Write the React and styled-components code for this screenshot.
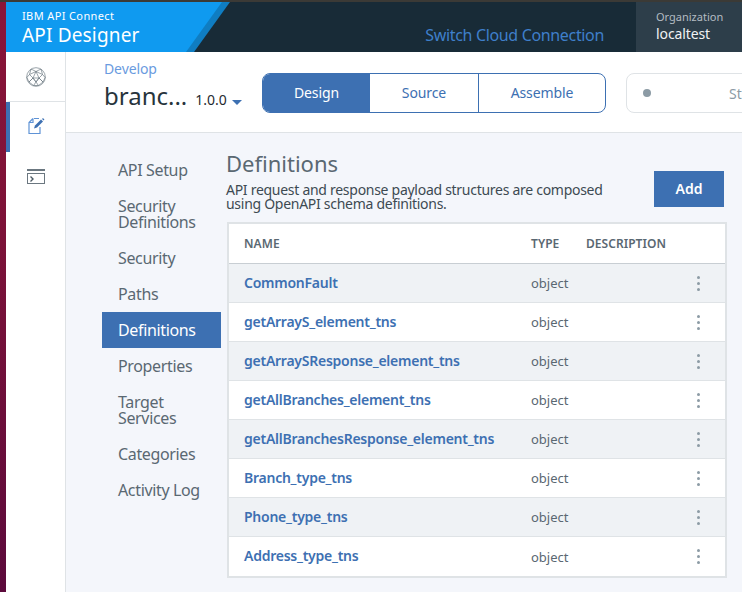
import React from 'react';
import styled, { createGlobalStyle } from 'styled-components';

const Global = createGlobalStyle`
  html, body { margin: 0; padding: 0; height: 592px; overflow: hidden; background: #f4f6fb; }
  * { box-sizing: border-box; }
  body { font-family: "Noto Sans", "Open Sans", sans-serif; }
`;

const Page = styled.div`
  width: 742px; height: 592px; overflow: hidden; display: flex; flex-direction: column;
`;
const TopEdge = styled.div`height: 2px; flex: none; background: #3b3a36;`;
const Shell = styled.div`flex: 1; display: flex; min-height: 0;`;
const Wallpaper = styled.div`width: 6px; flex: none; background: linear-gradient(180deg, #8a1538 0%, #7c1238 40%, #5c0a3c 100%);`;
const Frame = styled.div`flex: 1; min-width: 0; display: flex; flex-direction: column;`;

const Header = styled.header`height: 50px; flex: none; display: flex; background: #182b37; position: relative;`;
const Brand = styled.div`
  width: 224px; flex: none; background: #0f7dc2; color: #fff;
  clip-path: polygon(0 0, 224px 0, 188px 100%, 0 100%);
`;
const BrandFill = styled.div`
  height: 100%; padding: 7px 0 0 16px; background: #0f9af0;
  clip-path: polygon(0 0, 216px 0, 180px 100%, 0 100%);
`;
const BrandSmall = styled.div`font-size: 11px; line-height: 14px; letter-spacing: .38px;`;
const BrandBig = styled.div`font-size: 19px; line-height: 25px; letter-spacing: .16px;`;
const HeaderLink = styled.a`
  margin-left: auto; align-self: flex-end; padding-bottom: 6px; margin-right: 32px;
  font-size: 16px; line-height: 22px; color: #3f7fca; letter-spacing: -.34px;
`;
const Org = styled.div`width: 106px; flex: none; background: #2d3e4a; padding: 8px 0 0 20px;`;
const OrgLabel = styled.div`font-size: 11px; line-height: 14px; color: #b4bcc2;`;
const OrgName = styled.div`font-size: 14px; line-height: 18px; color: #f0f2f4; margin-top: 1px; letter-spacing: -.1px;`;

const Workspace = styled.div`flex: 1; display: flex; min-height: 0;`;
const Rail = styled.nav`width: 60px; flex: none; background: #fff; border-right: 1px solid #dfe3e6; display: flex; flex-direction: column;`;
const RailItem = styled.div`
  height: ${p => p.$h}px; display: flex; align-items: center; justify-content: center;
  border-bottom: ${p => p.$divider ? '1px solid #dfe3e6' : 'none'};
  border-left: 4px solid ${p => p.$active ? '#3d70b2' : 'transparent'};
  padding-right: 4px; padding-bottom: ${p => p.$lift || 0}px; flex: none;
`;

const Main = styled.main`flex: 1; min-width: 0; display: flex; flex-direction: column;`;
const Toolbar = styled.div`
  height: 81px; flex: none; background: #fff; border-bottom: 1px solid #dfe3e6;
  display: flex; align-items: flex-start; padding: 21px 0 0 38px; overflow: hidden;
`;
const Crumb = styled.div`width: 158px; flex: none; margin-top: -14px;`;
const CrumbLink = styled.div`font-size: 14px; line-height: 20px; color: #6a9be0; letter-spacing: -.1px;`;
const ApiName = styled.div`display: flex; align-items: baseline; margin-top: 1px; color: #27343c;`;
const ApiTitle = styled.span`font-size: 24px; line-height: 32px;`;
const ApiVersion = styled.span`font-size: 14px; margin-left: 8px; color: #1f2a30;`;
const Caret = styled.span`
  width: 0; height: 0; margin-left: 5px; align-self: center; margin-top: 12px;
  border-left: 5px solid transparent; border-right: 5px solid transparent; border-top: 5px solid #3d70b2;
`;
const Tabs = styled.div`width: 344px; height: 40px; flex: none; display: flex; border: 1px solid #3d70b2; border-radius: 8px; overflow: hidden; background: #fff;`;
const Tab = styled.div`
  width: ${p => p.$w}px; flex: none; display: flex; align-items: center; justify-content: center;
  font-size: 14px; padding-bottom: 2px; letter-spacing: -.1px; color: ${p => p.$active ? '#fff' : '#3d70b2'};
  background: ${p => p.$active ? '#3d70b2' : 'transparent'};
  border-left: ${p => p.$sep ? '1px solid #3d70b2' : 'none'};
`;
const Status = styled.div`
  width: 240px; height: 40px; flex: none; margin-left: 20px; display: flex; align-items: center;
  border: 1px solid #dfe3e6; border-radius: 8px; padding-left: 16px; background: #fff;
`;
const StatusDot = styled.span`width: 8px; height: 8px; border-radius: 50%; background: #8c9ba5; flex: none;`;
const StatusText = styled.span`margin-left: 78px; font-size: 14px; color: #8c9ba5; white-space: nowrap;`;

const Body = styled.div`flex: 1; min-height: 0; display: flex; background: #f4f6fb; padding: 19px 0 0 36px;`;
const SideNav = styled.nav`width: 119px; flex: none; display: flex; flex-direction: column;`;
const SideItem = styled.div`
  padding: 10px 8px 10px 16px; font-size: 16px; line-height: 16px; letter-spacing: -.35px;
  color: ${p => p.$active ? '#fff' : '#5a6872'};
  background: ${p => p.$active ? '#3d70b2' : 'transparent'};
`;
const Content = styled.section`width: 501px; flex: none; margin-left: 5px;`;
const TitleRow = styled.div`display: flex; justify-content: space-between; align-items: flex-start; height: 70px;`;
const Heading = styled.h1`margin: -2px 0 0; font-size: 22px; line-height: 26px; font-weight: 400; color: #5a6872;`;
const Lead = styled.p`margin: 7px 0 0; width: 390px; font-size: 14px; line-height: 14px; color: #3d4a52; letter-spacing: -.28px;`;
const AddButton = styled.button`
  width: 70px; height: 36px; margin-top: 19px; margin-right: 3px; border: 0; padding: 0 0 2px;
  background: #3d70b2; color: #fff; font: 600 14px "Noto Sans", sans-serif;
`;
const Table = styled.div`margin-left: 1px; width: 500px; border: 2px solid #dfe3e6; background: #fff;`;
const RowGrid = styled.div`
  display: grid; grid-template-columns: 287px 55px 1fr 28px; align-items: center; padding-left: 15px;
`;
const HeadRow = styled(RowGrid)`
  height: 40px; border-bottom: 1px solid #c8ced3; font-size: 12px; font-weight: 600; color: #5a6872; letter-spacing: .05px;
`;
const Row = styled(RowGrid)`
  height: 39px; background: ${p => p.$odd ? '#eff2f5' : '#fff'};
  border-bottom: ${p => p.$last ? 'none' : '1px solid #dfe3e6'};
`;
const RowName = styled.a`font-size: 14px; line-height: 18px; padding-bottom: 1px; font-weight: 600; color: #3d70b2; white-space: nowrap; letter-spacing: -.25px;`;
const RowType = styled.span`font-size: 13px; color: #5a6872;`;
const Kebab = styled.div`display: flex; flex-direction: column; gap: 3px; width: 3px;`;
const KebabDot = styled.span`width: 3px; height: 3px; border-radius: 50%; background: #8c9ba5;`;

const sections = [
  ['API Setup'], ['Security', 'Definitions'], ['Security'], ['Paths'], ['Definitions', null, true],
  ['Properties'], ['Target', 'Services'], ['Categories'], ['Activity Log'],
];
const rows = ['CommonFault', 'getArrayS_element_tns', 'getArraySResponse_element_tns', 'getAllBranches_element_tns',
  'getAllBranchesResponse_element_tns', 'Branch_type_tns', 'Phone_type_tns', 'Address_type_tns'];

const Globe = () => (
  <svg width="20" height="20" viewBox="0 0 20 20" fill="none" stroke="#6f7b84" strokeWidth=".7">
    <circle cx="10" cy="10" r="9.3" />
    <path d="M5 2l5 2.5L15 2M5 2L3.5 7.5 7 11l6 0 3.5-3.5L15 2M10 4.5L7 11M10 4.5L13 11M10 4.5L3.5 7.5M10 4.5l6.5 3M3.5 7.5L.8 10.5 3 15l4-4M16.500 7.500l2.700 3L17 15l-4-4M7 11l-4 4 4.500 3.500L10 15zM13 11l4 4-4.500 3.500L10 15zM7 11l3 4 3-4M7.500 18.500L12.500 18.500" />
  </svg>
);
const EditDoc = () => (
  <svg width="18" height="18" viewBox="0 0 18 18" fill="none">
    <path d="M7 1.500h5M6 1.500L2 5.500V16.500H13V10M2 5.500h4V1.500" stroke="#5f93d6" strokeWidth="1.2" />
    <path d="M7 11.500l1-3L14 2.500l2 2L10 10.500z" fill="#3d70b2" />
    <path d="M15.500 1.500l1.500 1.500" stroke="#3d70b2" strokeWidth="1.2" />
  </svg>
);
const Terminal = () => (
  <svg width="18" height="16" viewBox="0 0 18 16" fill="none">
    <rect x="0" y="0" width="18" height="2" fill="#6b7780" />
    <rect x=".5" y="4.500" width="17" height="10" stroke="#6b7780" />
    <path d="M3.500 7.500l2.500 2.500-2.500 2.500" stroke="#4d5b65" strokeWidth="1.4" />
  </svg>
);

export default function App() {
  return (
    <Page>
      <Global />
      <TopEdge />
      <Shell>
        <Wallpaper />
        <Frame>
          <Header>
            <Brand>
              <BrandFill>
                <BrandSmall>IBM API Connect</BrandSmall>
                <BrandBig>API Designer</BrandBig>
              </BrandFill>
            </Brand>
            <HeaderLink>Switch Cloud Connection</HeaderLink>
            <Org>
              <OrgLabel>Organization</OrgLabel>
              <OrgName>localtest</OrgName>
            </Org>
          </Header>
          <Workspace>
            <Rail>
              <RailItem $h={50} $divider><Globe /></RailItem>
              <RailItem $h={50} $active $lift={2}><EditDoc /></RailItem>
              <RailItem $h={50}><Terminal /></RailItem>
            </Rail>
            <Main>
              <Toolbar>
                <Crumb>
                  <CrumbLink>Develop</CrumbLink>
                  <ApiName>
                    <ApiTitle>branc...</ApiTitle>
                    <ApiVersion>1.0.0</ApiVersion>
                    <Caret />
                  </ApiName>
                </Crumb>
                <Tabs>
                  <Tab $w={107} $active>Design</Tab>
                  <Tab $w={108}>Source</Tab>
                  <Tab $w={127} $sep>Assemble</Tab>
                </Tabs>
                <Status>
                  <StatusDot />
                  <StatusText>Stopped</StatusText>
                </Status>
              </Toolbar>
              <Body>
                <SideNav>
                  {sections.map(([a, b, active]) => (
                    <SideItem key={a + b} $active={active}>{a}{b && <br />}{b}</SideItem>
                  ))}
                </SideNav>
                <Content>
                  <TitleRow>
                    <div>
                      <Heading>Definitions</Heading>
                      <Lead>API request and response payload structures are composed using OpenAPI schema definitions.</Lead>
                    </div>
                    <AddButton>Add</AddButton>
                  </TitleRow>
                  <Table>
                    <HeadRow><span>NAME</span><span>TYPE</span><span>DESCRIPTION</span><span /></HeadRow>
                    {rows.map((r, i) => (
                      <Row key={r} $odd={[0, 2, 4, 6].includes(i)} $last={i === rows.length - 1}>
                        <RowName>{r}</RowName>
                        <RowType>object</RowType>
                        <span />
                        <Kebab><KebabDot /><KebabDot /><KebabDot /></Kebab>
                      </Row>
                    ))}
                  </Table>
                </Content>
              </Body>
            </Main>
          </Workspace>
        </Frame>
      </Shell>
    </Page>
  );
}
